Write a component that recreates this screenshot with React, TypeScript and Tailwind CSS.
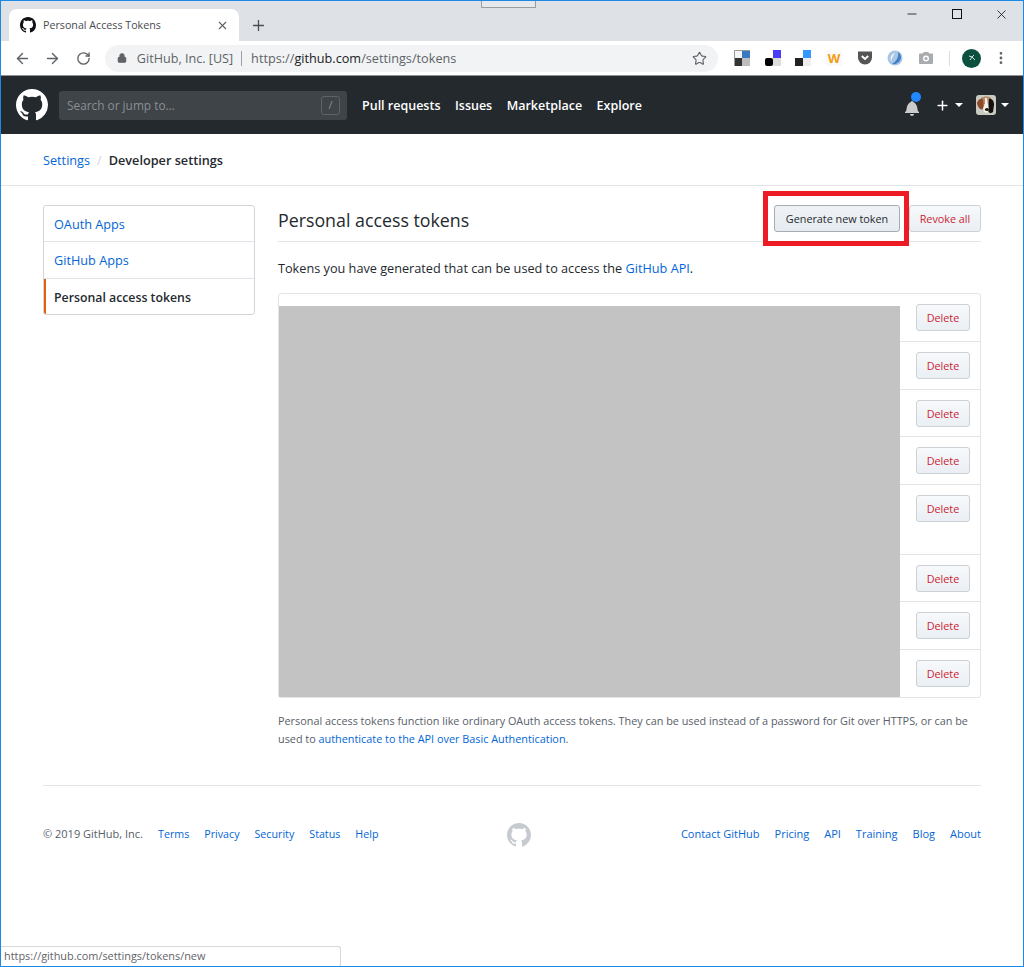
import { ArrowLeft, ArrowRight, RotateCw, Lock, Star, X, Plus, Minus, EllipsisVertical } from 'lucide-react';

const MARK =
  'M8 0C3.58 0 0 3.58 0 8c0 3.54 2.29 6.53 5.47 7.59.4.07.55-.17.55-.38 0-.19-.01-.82-.01-1.49-2.01.37-2.53-.49-2.69-.94-.09-.23-.48-.94-.82-1.13-.28-.15-.68-.52-.01-.53.63-.01 1.08.58 1.23.82.72 1.21 1.87.87 2.33.66.07-.52.28-.87.51-1.07-1.78-.2-3.64-.89-3.64-3.95 0-.87.31-1.59.82-2.15-.08-.2-.36-1.02.08-2.12 0 0 .67-.21 2.2.82.64-.18 1.32-.27 2-.27.68 0 1.36.09 2 .27 1.53-1.04 2.2-.82 2.2-.82.44 1.1.16 1.92.08 2.12.51.56.82 1.27.82 2.15 0 3.07-1.87 3.75-3.65 3.95.29.25.54.73.54 1.48 0 1.07-.01 1.93-.01 2.2 0 .21.15.46.55.38A8.013 8.013 0 0016 8c0-4.42-3.58-8-8-8z';

const GithubMark = ({ className }: { className: string }) => (
  <svg viewBox="0 0 16 16" className={className} fill="currentColor">
    <path fillRule="evenodd" d={MARK} />
  </svg>
);

const TOKEN_ROWS = ['h-[47px]', 'h-[48px]', 'h-[47px]', 'h-[48px]', 'h-[70px]', 'h-[47px]', 'h-[48px]', 'h-[48px]'];
const FOOTER_LEFT = ['Terms', 'Privacy', 'Security', 'Status', 'Help'];
const FOOTER_RIGHT = ['Contact GitHub', 'Pricing', 'API', 'Training', 'Blog', 'About'];

const Extensions = () => (
  <div className="flex items-center gap-[14.67px] ml-[16px]">
    <svg viewBox="0 0 16 16" className="w-4 h-4">
      <rect width="16" height="16" fill="#e8e8e8" />
      <rect x="8" width="8" height="8" fill="#3b78c4" />
      <rect y="8" width="8" height="8" fill="#333" />
      <rect width="8" height="8" fill="#f4f4f4" />
      <rect x="8" y="8" width="8" height="8" fill="#bdbdbd" />
      <path d="M.5 16V.5H16" fill="none" stroke="#9a9a9a" />
    </svg>
    <svg viewBox="0 0 16 16" className="w-4 h-4">
      <rect x="8" width="8" height="8" fill="#4a3df5" />
      <rect y="8" width="8" height="8" rx="2" fill="#000" />
      <rect x="8" y="8" width="8" height="8" fill="#dcdcdc" />
    </svg>
    <svg viewBox="0 0 16 16" className="w-4 h-4">
      <rect x="8" width="8" height="8" fill="#3399ff" />
      <rect y="8" width="8" height="8" fill="#222" />
      <rect x="8" y="8" width="8" height="8" fill="#eeeeee" />
    </svg>
    <span className="w-4 h-4 flex items-center justify-center text-[13px] font-bold text-[#f39c12] bg-[#fafafa] leading-none">W</span>
    <svg viewBox="0 0 16 16" className="w-4 h-4">
      <path d="M1 1.5h14v6a7 7 0 0 1-14 0z" fill="#555" />
      <path d="M4.8 6 8 9l3.2-3" fill="none" stroke="#fff" strokeWidth="2" />
    </svg>
    <svg viewBox="0 0 16 16" className="w-4 h-4">
      <circle cx="8" cy="8" r="7.5" fill="#a9c6e6" />
      <path d="M11 2c1 4-1 9-6 12 5 1 9-3 9-7 0-2-1-4-3-5z" fill="#3f7fc4" />
      <path d="M8 3C5 4 3 7 4 11c1-3 2-6 4-8z" fill="#fff" />
    </svg>
    <svg viewBox="0 0 16 16" className="w-4 h-4">
      <path d="M1.5 3.5h3L6 2h4l1.500 1.500h3A1 1 0 0 1 15 4.500v8.500a1 1 0 0 1-1 1H2a1 1 0 0 1-1-1V4.500a1 1 0 0 1 .5-1z" fill="#a9acaf" />
      <circle cx="8" cy="8.500" r="3" fill="#fff" />
      <circle cx="8" cy="8.500" r="1.600" fill="#a9acaf" />
    </svg>
  </div>
);

const BrowserChrome = () => (
  <>
    <div className="h-[40px] bg-[#dee1e6] pt-[8px] pl-[8px] flex items-start relative">
      <div className="w-[230px] h-[32px] bg-white rounded-t-[8px] flex items-center pl-[11px] pr-[10px]">
        <GithubMark className="w-4 h-4 text-[#111]" />
        <span className="ml-[7px] text-[10.700px] text-[#4a4c4f] flex-1">Personal Access Tokens</span>
        <X size={13} strokeWidth={2} className="text-[#5f6368]" />
      </div>
      <Plus size={17} strokeWidth={1.8} className="ml-[11px] mt-[8px] text-[#4a4c4f]" />
      <div className="absolute left-[480px] top-[-1px] w-[55px] h-[8px] border border-[#9a9ea3] bg-[#e6e8eb]" />
      <div className="ml-auto flex items-center h-[26px] mt-[-8px]">
        <Minus size={14} strokeWidth={1.4} className="text-[#111] mr-[33px]" />
        <span className="w-[10px] h-[10px] border border-[#111] mr-[32px]" />
        <X size={15} strokeWidth={1.3} className="text-[#111] mr-[14px]" />
      </div>
    </div>
    <div className="h-[35px] bg-white border-b border-[#8f9296] flex items-center pl-[13px] pr-[14px]">
      <ArrowLeft size={17} strokeWidth={2} className="text-[#5f6368]" />
      <ArrowRight size={17} strokeWidth={2} className="text-[#5f6368] ml-[13px]" />
      <RotateCw size={15} strokeWidth={2.2} className="text-[#5f6368] ml-[15px]" />
      <div className="ml-[14px] w-[615px] h-[27px] rounded-full bg-[#f1f3f4] flex items-center pl-[12px] pr-[11px]">
        <Lock size={10} strokeWidth={2.5} className="text-[#5f6368]" fill="#5f6368" />
        <span className="ml-[10px] pt-[2px] text-[12.600px] text-[#5f6368]">GitHub, Inc. [US]</span>
        <span className="ml-[8px] w-px h-[15px] bg-[#9aa0a6]" />
        <span className="ml-[9px] pt-[2px] text-[12.700px] text-[#5f6368]">
          https://<span className="text-[#202124]">github.com</span>/settings/tokens
        </span>
        <Star size={15} strokeWidth={1.8} className="ml-auto text-[#5f6368]" />
      </div>
      <Extensions />
      <span className="ml-[15px] w-px h-[15px] bg-[#dadce0]" />
      <span className="ml-[12px] w-[19px] h-[19px] rounded-full bg-[#0b4f3e] flex items-center justify-center">
        <svg viewBox="0 0 8 8" className="w-[8px] h-[8px]">
          <path d="M1 2l3 1 2-2M2 6l2-3 3 3" fill="none" stroke="#cfe3dc" />
        </svg>
      </span>
      <EllipsisVertical size={16} strokeWidth={2.2} className="ml-[12px] text-[#5f6368]" />
    </div>
  </>
);

const SiteHeader = () => (
  <header className="h-[58px] bg-[#24292e] flex items-center pl-[15px] pr-[14px] text-white">
    <GithubMark className="w-8 h-8 text-white" />
    <div className="ml-[11px] w-[288px] h-[29px] bg-[#3f4448] rounded-[3px] flex items-center justify-between pl-[8px] pr-[7px]">
      <span className="pt-[2px] text-[11.850px] text-[#8a8e92]">Search or jump to...</span>
      <span className="w-[19px] h-[19px] border border-[#5f6367] rounded-[3px] flex items-center justify-center text-[11px] text-[#8a8e92]">/</span>
    </div>
    <nav className="ml-[15px] pt-[3px] flex gap-[14.500px] text-[12.500px] font-semibold">
      <span>Pull requests</span>
      <span>Issues</span>
      <span>Marketplace</span>
      <span>Explore</span>
    </nav>
    <div className="ml-auto flex items-center">
      <span className="relative mr-[16px] mt-[5px] flex">
        <svg viewBox="0 0 14 16" className="w-[14px] h-4 text-[#c9cbcd]" fill="currentColor">
          <path d="M14 12v1H0v-1l.73-.58c.77-.77.81-2.55 1.19-4.42C2.69 3.23 6 2 6 2c0-.55.45-1 1-1s1 .45 1 1c0 0 3.39 1.23 4.16 5 .38 1.880.42 3.66 1.19 4.42l.66.58H14zm-7 4c1.110 0 2-.89 2-2H5c0 1.110.89 2 2 2z" />
        </svg>
        <span className="absolute right-[-2px] top-[-8px] w-[10px] h-[10px] rounded-full bg-[#2188ff]" />
      </span>
      <Plus size={15} strokeWidth={2.4} />
      <span className="ml-[5px] border-x-[4px] border-x-transparent border-t-[4px] border-t-white" />
      <svg viewBox="0 0 20 20" className="ml-[13px] w-[20px] h-[20px] rounded-[3px]">
        <rect width="20" height="20" fill="#c9cbc2" />
        <path d="M5 3c3-2 8-2 10 0v6H5z" fill="#b58a68" />
        <path d="M1 8c1-4 4-5 6-4l1 9c-2 3-6 1-7-5z" fill="#8e4a26" />
        <path d="M13 4c2-1 5 1 5 6l-1 7c-2 2-4 1-5-1z" fill="#17110e" />
        <path d="M9 3h2l1 7 1 5-2 3-3-1-1-4 2-4z" fill="#f4efe8" />
        <ellipse cx="11" cy="14.500" rx="2" ry="1.600" fill="#1c1512" />
      </svg>
      <span className="ml-[5px] border-x-[4px] border-x-transparent border-t-[4px] border-t-white" />
    </div>
  </header>
);

const Sidebar = () => (
  <div className="w-[212px] h-[110px] border border-[#d1d5da] rounded-[3px] text-[12.700px] overflow-hidden shrink-0">
    <div className="h-[36px] pl-[10px] pt-[3px] flex items-center text-[#0366d6] border-b border-[#e1e4e8]">OAuth Apps</div>
    <div className="h-[37px] pl-[10px] pt-[2px] flex items-center text-[#0366d6] border-b border-[#e1e4e8]">GitHub Apps</div>
    <div className="h-[35px] pl-[8px] pt-[3px] flex items-center text-[12.300px] font-semibold text-[#24292e] border-l-2 border-[#e36209]">Personal access tokens</div>
  </div>
);

const ActionButton = ({ label, className }: { label: string; className: string }) => (
  <button className={`h-[27px] pt-[2px] text-[10.800px] font-medium whitespace-nowrap border rounded-[3px] bg-gradient-to-b ${className}`}>
    {label}
  </button>
);

const TokenList = () => (
  <div className="relative mt-[15px] border border-[#e1e4e8] rounded-[3px]">
    {TOKEN_ROWS.map((height, i) => (
      <div key={i} className={`${height} flex justify-end pr-[10px] pt-[10px] border-t border-[#e1e4e8] first:border-t-0`}>
        <ActionButton label="Delete" className="w-[54px] text-[#cb2431] border-[#ccd1d6] from-[#f7f9fb] to-[#eaeff4]" />
      </div>
    ))}
    <div className="absolute left-0 top-[12px] bottom-0 w-[621px] bg-[#c3c3c3]" />
  </div>
);

const Footer = () => (
  <footer className="mt-[37px] mx-[42px] border-t border-[#e1e4e8] pt-[40px] flex items-center justify-between text-[11px] relative">
    <div className="flex items-center gap-[15px] text-[10.700px] text-[#0366d6] h-[16px]">
      <span className="text-[11px] text-[#586069]">© 2019 GitHub, Inc.</span>
      {FOOTER_LEFT.map(item => <span key={item}>{item}</span>)}
    </div>
    <GithubMark className="absolute left-[464px] top-[37px] w-6 h-6 text-[#c6cbd1]" />
    <div className="flex items-center gap-[15px] text-[#0366d6] h-[16px]">
      {FOOTER_RIGHT.map(item => <span key={item}>{item}</span>)}
    </div>
  </footer>
);

export default function App() {
  return (
    <div className="relative w-[1024px] h-[967px] overflow-hidden bg-white border border-[#1e88e5] font-['Open_Sans',sans-serif] text-[#24292e]">
      <BrowserChrome />
      <SiteHeader />
      <div className="h-[52px] pt-[3px] border-b border-[#e1e4e8] flex items-center pl-[42px] text-[12.700px]">
        <span className="text-[#0366d6]">Settings</span>
        <span className="mx-[7px] text-[#d1d5da]">/</span>
        <span className="font-semibold">Developer settings</span>
      </div>
      <main className="flex gap-[23px] mt-[19px] mx-[42px]">
        <Sidebar />
        <section className="flex-1">
          <div className="relative h-[37px] border-b border-[#e1e4e8] flex items-start justify-between">
            <h2 className="text-[17.800px] leading-[30px] font-normal">Personal access tokens</h2>
            <div className="flex gap-[9px]">
              <ActionButton label="Generate new token" className="w-[126px] text-[#24292e] border-[#a7acb2] from-[#eff3f6] to-[#e6ebf1]" />
              <ActionButton label="Revoke all" className="w-[72px] text-[#cb2431] border-[#ccd1d6] from-[#f7f9fb] to-[#eaeff4]" />
            </div>
            <div className="absolute left-[485px] top-[-14px] w-[146px] h-[55px] border-[5px] border-[#ed1c24]" />
          </div>
          <p className="mt-[16px] text-[12.700px] leading-[20px]">
            Tokens you have generated that can be used to access the <span className="text-[#0366d6]">GitHub API</span>.
          </p>
          <TokenList />
          <p className="mt-[14px] text-[10.850px] leading-[18px] text-[#586069]">
            Personal access tokens function like ordinary OAuth access tokens. They can be used instead of a password for Git over HTTPS, or can be used to <span className="text-[#0366d6]">authenticate to the API over Basic Authentication</span>.
          </p>
        </section>
      </main>
      <Footer />
      <div className="absolute left-0 bottom-0 w-[340px] h-[20px] bg-white border-t border-r border-[#d6d8da] rounded-tr-[3px] pl-[3px] text-[10.900px] leading-[18px] text-[#5f6368]">
        https://github.com/settings/tokens/new
      </div>
    </div>
  );
}
